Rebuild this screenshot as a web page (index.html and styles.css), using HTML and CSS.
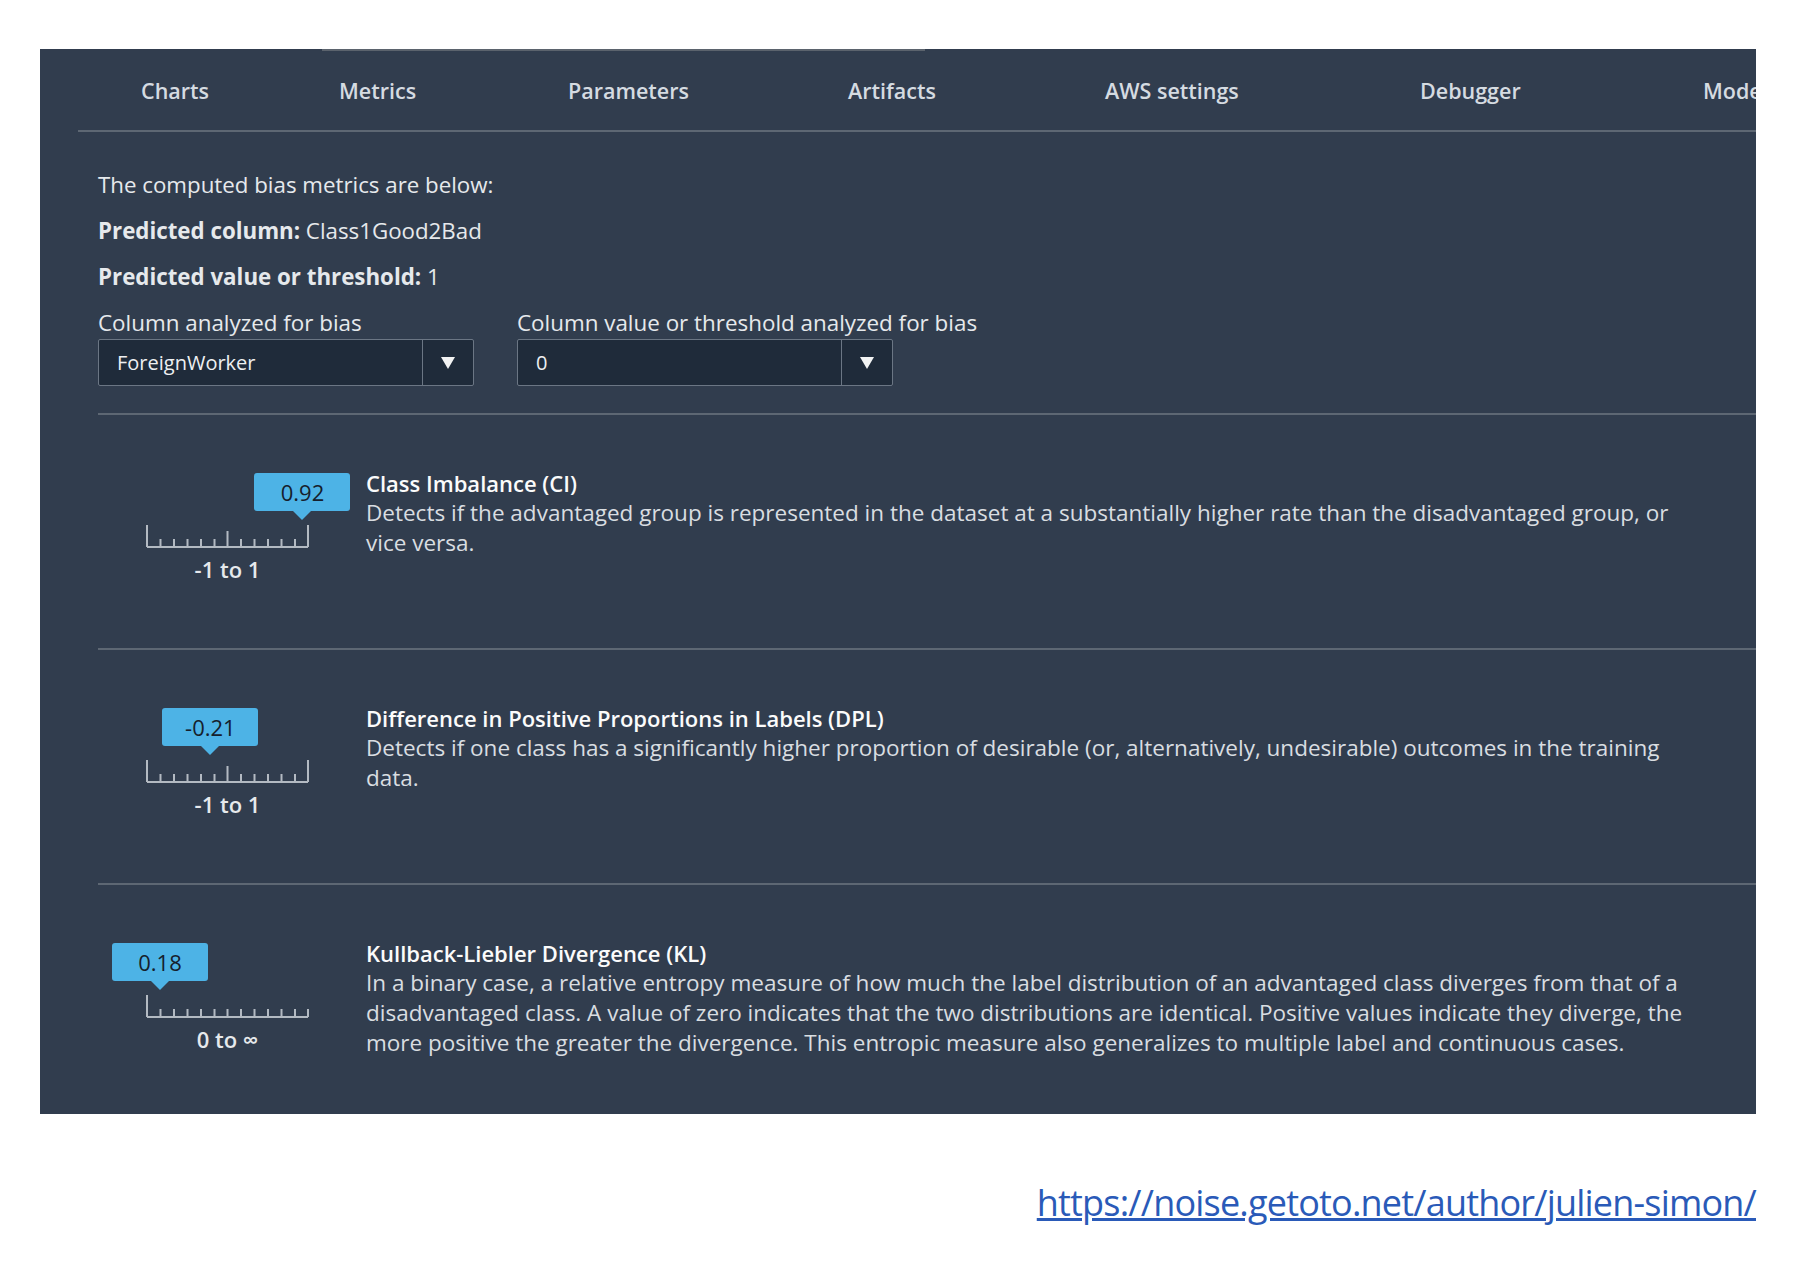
FILE: index.html
```html
<!DOCTYPE html>
<html lang="en">
<head>
    <meta charset="UTF-8">
    <title>Bias report</title>
    <link rel="stylesheet" href="styles.css">
</head>
<body>
    <div class="panel">
        <div class="scroll-thumb"></div>

        <nav class="tabs">
            <span class="tab">Charts</span>
            <span class="tab">Metrics</span>
            <span class="tab">Parameters</span>
            <span class="tab">Artifacts</span>
            <span class="tab">AWS settings</span>
            <span class="tab">Debugger</span>
            <span class="tab">Model</span>
        </nav>

        <div class="content">
            <p class="intro">The computed bias metrics are below:</p>
            <p class="intro"><b>Predicted column:</b> Class1Good2Bad</p>
            <p class="intro"><b>Predicted value or threshold:</b> 1</p>

            <div class="filters">
                <div class="field">
                    <label>Column analyzed for bias</label>
                    <div class="select">
                        <span class="select-value">ForeignWorker</span>
                        <span class="select-arrow"></span>
                    </div>
                </div>
                <div class="field">
                    <label>Column value or threshold analyzed for bias</label>
                    <div class="select">
                        <span class="select-value">0</span>
                        <span class="select-arrow"></span>
                    </div>
                </div>
            </div>

            <!-- Class Imbalance -->
            <div class="metric">
                <div class="gauge">
                    <div class="marker">
                        <span class="badge" style="left: 96%">0.92</span>
                    </div>
                    <svg class="ruler" width="163" height="23" viewBox="0 0 163 23">
                        <path d="M1 0V22 M14.5 14V22 M28 14V22 M41.5 14V22 M55 14V22 M68.5 14V22 M81.5 6V22 M95 14V22 M108.5 14V22 M122 14V22 M135.5 14V22 M149 14V22 M162 0V22 M1 22H162"/>
                    </svg>
                    <div class="range">-1 to 1</div>
                </div>
                <div class="metric-text">
                    <div class="metric-title">Class Imbalance (CI)</div>
                    <div class="metric-desc">Detects if the advantaged group is represented in the dataset at a substantially higher rate than the disadvantaged group, or vice versa.</div>
                </div>
            </div>

            <!-- DPL -->
            <div class="metric">
                <div class="gauge">
                    <div class="marker">
                        <span class="badge" style="left: 39.5%">-0.21</span>
                    </div>
                    <svg class="ruler" width="163" height="23" viewBox="0 0 163 23">
                        <path d="M1 0V22 M14.5 14V22 M28 14V22 M41.5 14V22 M55 14V22 M68.5 14V22 M81.5 6V22 M95 14V22 M108.5 14V22 M122 14V22 M135.5 14V22 M149 14V22 M162 0V22 M1 22H162"/>
                    </svg>
                    <div class="range">-1 to 1</div>
                </div>
                <div class="metric-text">
                    <div class="metric-title">Difference in Positive Proportions in Labels (DPL)</div>
                    <div class="metric-desc">Detects if one class has a significantly higher proportion of desirable (or, alternatively, undesirable) outcomes in the training data.</div>
                </div>
            </div>

            <!-- KL -->
            <div class="metric">
                <div class="gauge">
                    <div class="marker">
                        <span class="badge" style="left: 8.6%">0.18</span>
                    </div>
                    <svg class="ruler" width="163" height="23" viewBox="0 0 163 23">
                        <path d="M1 0V22 M14.5 14V22 M28 14V22 M41.5 14V22 M55 14V22 M68.5 14V22 M81.5 14V22 M95 14V22 M108.5 14V22 M122 14V22 M135.5 14V22 M149 14V22 M162 14V22 M1 22H162"/>
                    </svg>
                    <div class="range">0 to &infin;</div>
                </div>
                <div class="metric-text">
                    <div class="metric-title">Kullback-Liebler Divergence (KL)</div>
                    <div class="metric-desc">In a binary case, a relative entropy measure of how much the label distribution of an advantaged class diverges from that of a disadvantaged class. A value of zero indicates that the two distributions are identical. Positive values indicate they diverge, the more positive the greater the divergence. This entropic measure also generalizes to multiple label and continuous cases.</div>
                </div>
            </div>
        </div>
    </div>

    <div class="source">
        <a href="#">https://noise.getoto.net/author/julien-simon/</a>
    </div>
</body>
</html>
```

FILE: styles.css
```css
body {
    margin: 0;
    width: 1798px;
    height: 1278px;
    background: #ffffff;
    font-family: "Open Sans", Arial, sans-serif;
    overflow: hidden;
}
.panel {
    position: relative;
    margin: 49px 0 0 40px;
    width: 1716px;
    height: 1065px;
    background-color: #313d4e;
    overflow: hidden;
}
.scroll-thumb {
    position: absolute;
    top: 0;
    left: 282px;
    width: 603px;
    height: 2px;
    background: #5b636d;
}
.tabs {
    display: grid;
    grid-template-columns: 198px 229px 280px 257px 315px 283px auto;
    margin-left: 38px;
    padding: 2px 0 0 63px;
    height: 79px;
    align-items: center;
    border-bottom: 2px solid #5d6773;
    white-space: nowrap;
}
.tab {
    font-size: 21.5px;
    font-weight: 600;
    color: #d5dbe1;
}
.content {
    padding: 30px 0 0 58px;
}
.intro {
    margin: 0;
    font-size: 22.3px;
    font-weight: 500;
    line-height: 46px;
    color: #e6e9ec;
}
.intro b {
    font-weight: 700;
}
.filters {
    display: flex;
    gap: 43px;
    margin-top: 10px;
    padding-bottom: 27px;
    border-bottom: 2px solid #5d6773;
}
.field label {
    display: block;
    font-size: 22.4px;
    font-weight: 500;
    line-height: 28px;
    color: #e6e9ec;
    margin-top: -1px;
    margin-bottom: 2px;
}
.select {
    display: flex;
    width: 376px;
    height: 47px;
    box-sizing: border-box;
    border: 1px solid #6b7684;
    border-radius: 2px;
    background-color: #1f2b3a;
}
.select-value {
    flex: 1;
    padding-left: 18px;
    font-size: 20px;
    font-weight: 500;
    line-height: 45px;
    color: #eef0f2;
}
.select-arrow {
    width: 50px;
    border-left: 1px solid #6b7684;
    display: flex;
    align-items: center;
    justify-content: center;
}
.select-arrow::after {
    content: "";
    border-left: 7px solid transparent;
    border-right: 7px solid transparent;
    border-top: 12px solid #f2f3f3;
}
.metric {
    display: flex;
    height: 233px;
    border-bottom: 2px solid #5d6773;
}
.gauge {
    width: 163px;
    margin: 58px 57px 0 48px;
    flex-shrink: 0;
}
.marker {
    position: relative;
    height: 52px;
}
.badge {
    position: absolute;
    top: 0;
    transform: translateX(-50%);
    min-width: 96px;
    height: 38px;
    box-sizing: border-box;
    padding: 0 12px;
    border-radius: 3px;
    background-color: #4db3e6;
    color: #16202c;
    font-size: 22px;
    line-height: 38px;
    text-align: center;
}
.badge::after {
    content: "";
    position: absolute;
    left: 50%;
    bottom: -9px;
    margin-left: -9px;
    border-left: 9px solid transparent;
    border-right: 9px solid transparent;
    border-top: 9px solid #4db3e6;
}
.ruler {
    display: block;
}
.ruler path {
    stroke: #b3bac2;
    stroke-width: 2;
    fill: none;
}
.range {
    margin-top: 7px;
    text-align: center;
    font-size: 22px;
    font-weight: 600;
    line-height: 28px;
    color: #e6e9ec;
}
.metric-text {
    padding-top: 53px;
    max-width: 1340px;
}
.metric-title {
    font-size: 22px;
    font-weight: 600;
    line-height: 30px;
    color: #fbfbfb;
}
.metric-desc {
    font-size: 22.5px;
    font-weight: 500;
    line-height: 30px;
    color: #d9dde1;
}
.source {
    text-align: right;
    padding: 67px 42px 0 0;
}
.source a {
    font-family: "Open Sans", "Liberation Sans", sans-serif;
    font-size: 36px;
    letter-spacing: -0.8px;
    line-height: 44px;
    color: #2a5ab8;
}
```
